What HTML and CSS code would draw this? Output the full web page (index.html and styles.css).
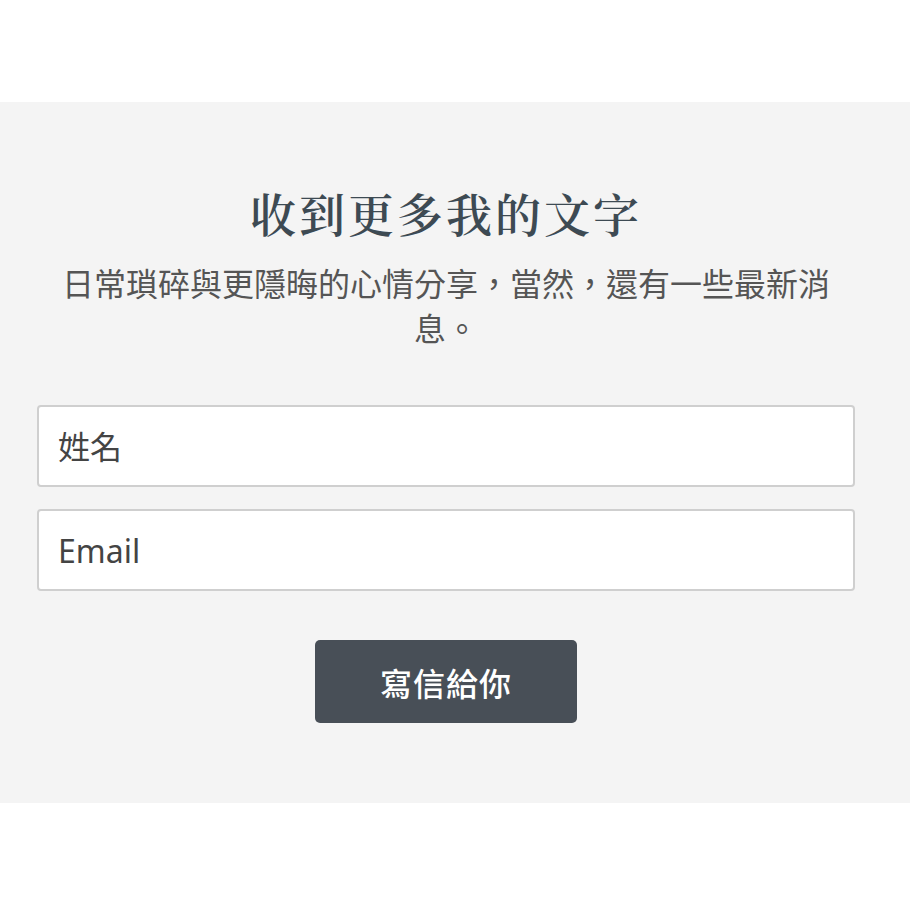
FILE: index.html
```html
<!DOCTYPE html>
<html lang="zh-Hant">
<head>
  <meta charset="UTF-8" />
  <meta name="viewport" content="width=device-width, initial-scale=1.0"/>
  <title>收到更多我的文字</title>
  <link rel="stylesheet" href="styles.css">
</head>
<body>

  <section class="signup">
    <h2>收到更多我的文字</h2>
    <p class="lead">日常瑣碎與更隱晦的心情分享，當然，還有一些最新消息。</p>

    <form class="signup-form">
      <input type="text" placeholder="姓名">
      <input type="email" placeholder="Email">
      <button type="submit">寫信給你</button>
    </form>
  </section>

</body>
</html>
```

FILE: styles.css
```css
body {
  margin: 0;
  background: #fff;
  font-family: "Noto Sans", "Noto Sans CJK TC", sans-serif;
}

.signup {
  margin-top: 102px;
  background: #f4f4f4;
  padding: 78px 55px 80px 37px;
  text-align: center;
}

.signup h2 {
  margin: 0;
  font-family: "Noto Serif CJK TC", "Noto Sans CJK TC", serif;
  font-size: 46px;
  line-height: 64px;
  font-weight: 600;
  letter-spacing: 3px;
  color: #3d4a53;
}

.lead {
  max-width: 780px;
  margin: 16px auto 0;
  font-family: "Noto Sans CJK TC", sans-serif;
  font-size: 32px;
  line-height: 45px;
  color: #555;
}

.signup-form {
  margin-top: 55px;
  display: flex;
  flex-direction: column;
  align-items: center;
  gap: 22px;
}

.signup-form input {
  box-sizing: border-box;
  width: 100%;
  height: 82px;
  padding: 0 19px;
  border: 2px solid #cfcfcf;
  border-radius: 4px;
  background: #fff;
  font-family: "Noto Sans", "Noto Sans CJK TC", sans-serif;
  font-size: 32px;
  color: #444;
}

.signup-form input::placeholder {
  color: #444;
}

.signup-form button {
  margin-top: 27px;
  width: 262px;
  height: 83px;
  border: none;
  border-radius: 5px;
  background: #484f57;
  color: #fff;
  font-family: "Noto Sans CJK TC", sans-serif;
  font-size: 32px;
  font-weight: 500;
  letter-spacing: 1px;
}
```
